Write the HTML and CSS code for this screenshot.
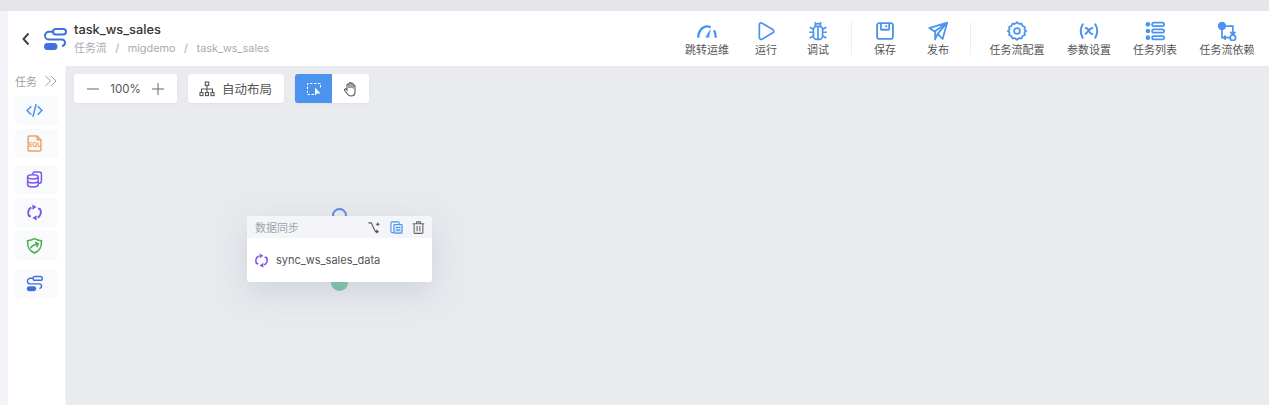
FILE: index.html
```html
<!DOCTYPE html>
<html lang="zh-CN">
<head>
    <meta charset="UTF-8">
    <title>task_ws_sales</title>
    <link rel="stylesheet" href="styles.css">
</head>

<body>
    <div class="app">
        <div class="shell">
            <header class="top-bar">
                <button class="back-btn">
                    <svg width="10" height="14" viewBox="0 0 10 14"><path d="M7.5 1.5 2.5 7l5 5.5" fill="none" stroke="#444" stroke-width="2"/></svg>
                </button>
                <svg class="flow-logo" width="24" height="24" viewBox="0 0 24 24"><use href="#flow-icon"/></svg>
                <div class="title-block">
                    <h1 class="flow-name">task_ws_sales</h1>
                    <div class="crumbs"><span>任务流</span><i>/</i><span>migdemo</span><i>/</i><span>task_ws_sales</span></div>
                </div>

                <nav class="tools">
                    <a class="tool w-jump">
                        <svg viewBox="0 0 24 24" fill="none" stroke="#4a94f0" stroke-width="2.800"><path d="M1.500 20C1.500 12 6.500 6.500 12 6.500c1.500 0 3 .3 4.500 1M20.500 11c1.300 2.500 2 5.500 2 9"/><path d="M10 19.500 16.500 9l-2 11z" fill="#4a94f0" stroke="none"/></svg>
                        跳转运维
                    </a>
                    <a class="tool w-run">
                        <svg viewBox="0 0 24 24"><path d="M4 4.500c0-2 1.600-2.800 3.200-1.900l13 7.700c1.500.9 1.500 2.900 0 3.800l-13 7.700C5.600 22.700 4 21.500 4 19.500z" fill="none" stroke="#4a94f0" stroke-width="2.100"/></svg>
                        运行
                    </a>
                    <a class="tool w-debug">
                        <svg viewBox="0 0 24 24" fill="none" stroke="#4a94f0" stroke-width="2"><rect x="6.500" y="6.500" width="11" height="15.500" rx="4"/><path d="M8.500 6.500a3.500 3.500 0 0 1 7 0M8 1.500 10 4M16 1.500 14 4M12 7v15M1.500 13.500h5M17.500 13.500h5M2 7.500l4.500 2.500M22 7.500 17.500 10M2 20.500l4.500-2.500M22 20.500 17.500 18"/></svg>
                        调试
                    </a>
                    <span class="tool-sep"></span>
                    <a class="tool w-save">
                        <svg viewBox="0 0 24 24" fill="none" stroke="#4a94f0" stroke-width="2.200"><path d="M2.500 5A2.500 2.500 0 0 1 5 2.500h14A2.500 2.500 0 0 1 21.500 5v14a2.500 2.500 0 0 1-2.500 2.500H5A2.500 2.500 0 0 1 2.500 19z"/><path d="M7 2.500v7a1 1 0 0 0 1 1h8a1 1 0 0 0 1-1v-7"/><path d="M13.500 5v2.500"/></svg>
                        保存
                    </a>
                    <a class="tool w-pub">
                        <svg viewBox="0 0 24 24" fill="none" stroke="#4a94f0" stroke-width="2.100" stroke-linejoin="round"><path d="M23 2 1.500 8.500l6.500 4L23 2l-5.500 19.500-6-6-3 6.500V12.500"/><path d="M11.500 15.500 23 2"/></svg>
                        发布
                    </a>
                    <span class="tool-sep"></span>
                    <a class="tool w-conf">
                        <svg viewBox="0 0 24 24" fill="none" stroke="#4a94f0" stroke-width="2.100"><path d="M12 1.500l2.400 2 3-.4 1.300 2.800 2.800 1.400-.6 3L23 12l-2.100 1.700.6 3-2.800 1.400-1.300 2.800-3-.4-2.400 2-2.400-2-3 .4-1.300-2.800-2.800-1.400.6-3L1 12l2.100-1.700-.6-3 2.800-1.400 1.300-2.800 3 .4z" stroke-linejoin="round"/><circle cx="12" cy="12" r="3.500"/></svg>
                        任务流配置
                    </a>
                    <a class="tool w-param">
                        <svg viewBox="0 0 24 24" fill="none" stroke="#4a94f0" stroke-width="2.400" stroke-linecap="round"><path d="M4.500 4C1.500 9 1.500 15 4.500 20M19.500 4c3 5 3 11 0 16M8 8.500c2.500 0 3 1 4 3.500s1.500 3.500 4 3.500M16 8.500c-2.500.5-5.500 4-8 7"/></svg>
                        参数设置
                    </a>
                    <a class="tool w-list">
                        <svg viewBox="0 0 24 24" fill="none" stroke="#4a94f0" stroke-width="2.100"><circle cx="3.500" cy="4" r="2.800" fill="#4a94f0" stroke="none"/><circle cx="3.500" cy="12" r="2.800" fill="#4a94f0" stroke="none"/><circle cx="3.500" cy="20" r="2.800" fill="#4a94f0" stroke="none"/><rect x="8.500" y="2" width="14.500" height="4" rx="2"/><rect x="8.500" y="10" width="14.500" height="4" rx="2"/><rect x="8.500" y="18" width="14.500" height="4" rx="2"/></svg>
                        任务列表
                    </a>
                    <a class="tool w-dep">
                        <svg viewBox="0 0 24 24" fill="none" stroke="#4a94f0" stroke-width="2.100"><circle cx="6" cy="6" r="5" fill="#4a94f0" stroke="none"/><circle cx="19" cy="20" r="3.300"/><path d="M6 11v9h9.500M11 6h8v9.500M16 13l3 3 3-3M10.500 17.500 8 20l2.500 2.500"/></svg>
                        任务流依赖
                    </a>
                </nav>
            </header>

            <div class="work-area">
                <aside class="task-panel">
                    <div class="panel-head">
                        <span>任务</span>
                        <svg width="14" height="12" viewBox="0 0 14 12" fill="none" stroke="#9aa0a8"><path d="M1.500 1l5 5-5 5M7 1l5 5-5 5"/></svg>
                    </div>
                    <div class="task-type">
                        <svg viewBox="0 0 16 16" fill="none" stroke="#4a94f0" stroke-width="1.500"><path d="M5 4 1 8l4 4M11 4l4 4-4 4M9.500 2 6.500 14"/></svg>
                    </div>
                    <div class="task-type">
                        <svg viewBox="0 0 16 16" fill="none" stroke="#f0a060" stroke-width="1.400"><path d="M2 2a1 1 0 0 1 1-1h7.500L14 4.500V14a1 1 0 0 1-1 1H3a1 1 0 0 1-1-1z"/><path d="M10.500 1v3.500H14"/><text class="sql-mark" x="8" y="11.500" text-anchor="middle">SQL</text></svg>
                    </div>
                    <div class="task-type task-type-gap">
                        <svg viewBox="0 0 16 16" fill="none" stroke="#7c55e8" stroke-width="1.400"><path d="M6.500 3V2.500A1.500 1.500 0 0 1 8 1h4.500a2 2 0 0 1 2 2v6.500a2 2 0 0 1-2 2H12"/><ellipse cx="6.500" cy="5.500" rx="5" ry="2"/><path d="M1.500 5.500v7.500c0 1.100 2.200 2 5 2s5-.9 5-2V5.500M1.500 9.200c0 1.100 2.200 2 5 2s5-.9 5-2"/></svg>
                    </div>
                    <div class="task-type">
                        <svg viewBox="0 0 16 16"><use href="#sync-icon"/></svg>
                    </div>
                    <div class="task-type">
                        <svg viewBox="0 0 16 16" fill="none" stroke="#4caf50" stroke-width="1.500"><path d="M1.500 3.500C5 3 6 2.500 8 1.500c2 1 3 1.500 6.500 2 .3 5-.5 9-6.500 11.500C2 12.500 1.200 8.500 1.500 3.500z"/><path d="M4.500 10.500C5.500 8 8 7 11.500 6.500M8.500 5l3 1.500-1.500 3"/></svg>
                    </div>
                    <div class="task-type task-type-last">
                        <svg viewBox="0 0 24 24"><use href="#flow-icon"/></svg>
                    </div>
                </aside>

                <main class="canvas">
                    <div class="canvas-tools">
                        <div class="tool-card zoom-card">
                            <svg width="12" height="12" viewBox="0 0 12 12" stroke="#666"><path d="M0 6h12"/></svg>
                            <span>100%</span>
                            <svg width="12" height="12" viewBox="0 0 12 12" stroke="#666"><path d="M0 6h12M6 0v12"/></svg>
                        </div>
                        <div class="tool-card layout-card">
                            <svg width="16" height="16" viewBox="0 0 16 16" fill="none" stroke="#555" stroke-width="1.100"><rect x="6.300" y="1" width="3.400" height="3.400"/><rect x="1" y="11.600" width="3" height="3"/><rect x="6.500" y="11.600" width="3" height="3"/><rect x="12" y="11.600" width="3" height="3"/><path d="M8 4.400v7.200M2.500 11.600V8h11v3.600"/></svg>
                            <span>自动布局</span>
                        </div>
                        <div class="mode-switch">
                            <span class="mode mode-on">
                                <svg width="16" height="14" viewBox="0 0 16 14" fill="none"><path d="M8 12.500H1.500v-11h13V7" stroke="#fff" stroke-dasharray="2.500 1.500"/><path d="M9 5.500v8l2-2h3.500z" fill="#fff"/></svg>
                            </span>
                            <span class="mode">
                                <svg width="16" height="16" viewBox="0 0 16 16" fill="none" stroke="#555" stroke-width="1.100"><path d="M4 9V4a1 1 0 0 1 2 0v3-4.500a1 1 0 0 1 2 0V7V3a1 1 0 0 1 2 0v4.500V5a1 1 0 0 1 2 0v6c0 2.500-1.500 4-4 4-2 0-3-1-4-2.500L1.700 9.500c-.7-1.200.8-2.200 1.700-1.200z"/></svg>
                            </span>
                        </div>
                    </div>

                    <div class="node-zone"></div>
                    <span class="port port-in"></span>
                    <span class="port port-out"></span>
                    <section class="node">
                        <div class="node-head">
                            <span class="node-kind">数据同步</span>
                            <span class="node-actions">
                                <svg viewBox="0 0 14 14" fill="none" stroke="#555" stroke-width="1.200"><path d="M.5 2h3L8 11.500h2.500M9 9.500l2 2-2 1.500M10.500 1.500v4M8.500 3.500h4"/></svg>
                                <svg viewBox="0 0 14 14" fill="none" stroke="#4a94f0" stroke-width="1.200"><path d="M4 12.500H2.500A1.500 1.500 0 0 1 1 11V2.500A1.500 1.500 0 0 1 2.500 1h6A1.500 1.500 0 0 1 10 2.500v1"/><rect x="4.200" y="3.700" width="8.800" height="9.300" rx="1" fill="#cfe2fb"/><path d="M6.500 7H11M6.500 9.800H11"/></svg>
                                <svg viewBox="0 0 14 14" fill="none" stroke="#666" stroke-width="1.200"><path d="M.8 3h12.400M5 3V1h4v2M2.300 3v9.300a1 1 0 0 0 1 1h7.400a1 1 0 0 0 1-1V3M5.500 5.500V11M8.500 5.500V11"/></svg>
                            </span>
                        </div>
                        <div class="node-body">
                            <svg width="15" height="15" viewBox="0 0 16 16"><use href="#sync-icon"/></svg>
                            <span>sync_ws_sales_data</span>
                        </div>
                    </section>
                </main>
            </div>
        </div>
    </div>

    <svg class="icon-defs" width="0" height="0">
        <symbol id="sync-icon" viewBox="0 0 16 16">
            <path d="M5 3.200A6 6 0 0 0 2.600 11l2 .8M11 12.800A6 6 0 0 0 13.400 5l-2-.8" fill="none" stroke="#7c55e8" stroke-width="1.800"/>
            <path d="M6 .5 10 2.800 6 5.500zM10 15.500 6 13.200l4-2.700z" fill="#7c55e8"/>
        </symbol>
        <symbol id="flow-icon" viewBox="0 0 24 24">
            <rect x="10" y="2" width="13" height="5.500" rx="2.700" fill="none" stroke="#3f6fe0" stroke-width="2"/>
            <path d="M9.500 4.700H6A4 4 0 0 0 2 8.700a4 4 0 0 0 4 3.800h12.500a3.200 3.200 0 0 1 3.500 3.200 3.400 3.400 0 0 1-3 3.300" fill="none" stroke="#3f6fe0" stroke-width="2"/>
            <rect x="1" y="16" width="13.500" height="7" rx="3.500" fill="#3f6fe0"/>
        </symbol>
    </svg>
</body>
</html>
```

FILE: styles.css
```css
:root {
    --color-canvas: #e9ebef;
    --color-blue: #4a94f0;
    --color-text: #555b63;
}

* {
    margin: 0;
    padding: 0;
    box-sizing: border-box;
}

html, body {
    height: 100%;
    overflow: hidden;
}

body {
    background-color: #fff;
    font-family: "Inter", "Noto Sans CJK SC", sans-serif;
    color: var(--color-text);
}

.app {
    height: calc(100% - 4px);
    padding-top: 11px;
    background-color: #e4e6e9;
}

.shell {
    height: 100%;
    display: flex;
    flex-direction: column;
    border-left: 8px solid #f2f4f8;
}

.top-bar {
    height: 55px;
    flex-shrink: 0;
    display: flex;
    align-items: center;
    background-color: #fff;
}

.back-btn {
    width: 12px;
    margin-left: 13px;
    background: none;
    border: none;
    display: flex;
}

.flow-logo {
    margin-left: 10px;
}

.title-block {
    margin-left: 7px;
}

.flow-name {
    font-size: 12.8px;
    font-weight: 500;
    line-height: 17px;
    color: #333;
}

.crumbs {
    margin-top: 2px;
    font-size: 10.9px;
    line-height: 16px;
    color: #a6abb3;
    display: flex;
}

.crumbs i {
    font-style: normal;
    margin: 0 8.5px;
}

.tools {
    margin-left: auto;
    display: flex;
    align-items: center;
}

.tool {
    display: flex;
    flex-direction: column;
    align-items: center;
    font-size: 11px;
    line-height: 16px;
    color: #555;
    white-space: nowrap;
}

.tool svg {
    width: 20px;
    height: 20px;
    margin: 1px 0;
}

.w-jump { width: 46px; margin-right: 24px; }
.w-run { width: 24px; margin-right: 28px; }
.w-debug { width: 24px; margin-right: 21px; }
.w-save { width: 24px; margin-left: 21px; margin-right: 29px; }
.w-pub { width: 24px; margin-right: 20px; }
.w-conf { width: 56px; margin-left: 18px; margin-right: 21px; }
.w-param { width: 46px; margin-right: 20px; }
.w-list { width: 46px; margin-right: 21px; }
.w-dep { width: 56px; margin-right: 14px; }

.tool-sep {
    width: 1px;
    height: 33px;
    background-color: #eceef1;
}

.work-area {
    flex: 1;
    display: flex;
    min-height: 0;
}

.task-panel {
    width: 58px;
    flex-shrink: 0;
    background-color: #fff;
    border-right: 1px solid #f2f4f7;
    padding: 7px 7px 0;
}

.panel-head {
    height: 16px;
    margin-bottom: 7px;
    display: flex;
    align-items: center;
    justify-content: space-between;
    font-size: 11px;
    color: #9aa0a8;
}

.task-type {
    width: 43px;
    height: 29px;
    margin-bottom: 4px;
    padding-right: 5px;
    display: flex;
    align-items: center;
    justify-content: center;
    background-color: #f9fafc;
    border-radius: 4px;
}

.task-type svg {
    width: 17px;
    height: 17px;
}

.task-type-gap {
    margin-top: 7px;
}

.task-type-last {
    margin-top: 9px;
}

.sql-mark {
    font-size: 6px;
    font-weight: 700;
    fill: #f0a060;
    stroke: none;
    font-family: "Inter", sans-serif;
}

.canvas {
    flex: 1;
    position: relative;
    background-color: var(--color-canvas);
    padding: 8px;
}

.canvas-tools {
    display: flex;
    gap: 11px;
}

.tool-card {
    height: 29px;
    display: flex;
    align-items: center;
    background-color: #fff;
    border-radius: 3px;
    box-shadow: 0 1px 3px rgba(0, 0, 0, 0.05);
    font-size: 11.5px;
    color: #555;
}

.zoom-card {
    width: 103px;
    padding: 0 13px;
    justify-content: space-between;
}

.layout-card {
    width: 96px;
    padding-left: 11px;
    gap: 7px;
    font-size: 12.5px;
}

.mode-switch {
    display: flex;
    border-radius: 3px;
    overflow: hidden;
    box-shadow: 0 1px 3px rgba(0, 0, 0, 0.05);
}

.mode {
    width: 37px;
    height: 29px;
    display: flex;
    align-items: center;
    justify-content: center;
    background-color: #fff;
}

.mode-on {
    background-color: var(--color-blue);
}

/* nodes sit on a free canvas, so these use coordinates */
.node-zone {
    position: absolute;
    left: 130px;
    top: 126px;
    width: 288px;
    height: 168px;
    background-color: #e8eaee;
}

.port {
    position: absolute;
    border-radius: 50%;
}

.port-in {
    left: 266px;
    top: 142px;
    width: 15px;
    height: 15px;
    border: 2px solid #5c86e8;
}

.port-out {
    left: 265px;
    top: 208px;
    width: 17px;
    height: 17px;
    background-color: #6dc19a;
}

.node {
    position: absolute;
    left: 181px;
    top: 150px;
    width: 185px;
    height: 66px;
    background-color: #fff;
    border-radius: 3px;
    box-shadow: 0 10px 30px rgba(170, 180, 195, 0.4);
    overflow: hidden;
}

.node-head {
    height: 22px;
    padding: 0 7px 0 8px;
    display: flex;
    align-items: center;
    justify-content: space-between;
    background-color: #f3f5f8;
    font-size: 11px;
    color: #a0a5ad;
}

.node-actions {
    display: flex;
    gap: 9px;
}

.node-actions svg {
    width: 13px;
    height: 13px;
}

.node-body {
    height: 44px;
    padding-left: 7px;
    display: flex;
    align-items: center;
    gap: 7px;
    font-size: 11px;
    color: #555;
}

.icon-defs {
    position: absolute;
}
```
